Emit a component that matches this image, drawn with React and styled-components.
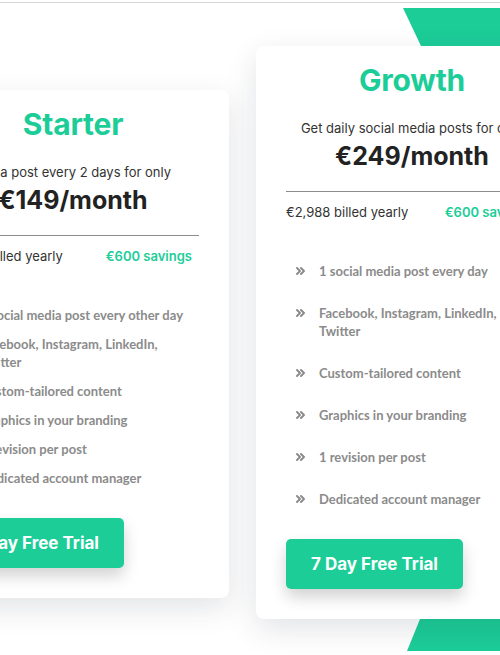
import React from 'react';
import styled, { createGlobalStyle } from 'styled-components';

const GlobalStyle = createGlobalStyle`
  html, body {
    margin: 0;
    padding: 0;
    background: #ffffff;
    overflow: hidden;
  }
  body {
    font-family: Inter, "Liberation Sans", sans-serif;
    color: #2b2b2b;
  }
`;

const green = '#1ccd98';

const plans = [
  {
    name: 'Starter',
    pitch: 'Get a post every 2 days for only',
    price: '€149/month',
    billed: '€1,188 billed yearly',
    savings: '€600 savings',
    offset: 44,
    spacing: 11,
    features: [
      '1 social media post every other day',
      'Facebook, Instagram, LinkedIn, Twitter',
      'Custom-tailored content',
      'Graphics in your branding',
      '1 revision per post',
      'Dedicated account manager',
    ],
  },
  {
    name: 'Growth',
    pitch: 'Get daily social media posts for only',
    price: '€249/month',
    billed: '€2,988 billed yearly',
    savings: '€600 savings',
    offset: 0,
    spacing: 24,
    featured: true,
    features: [
      '1 social media post every day',
      'Facebook, Instagram, LinkedIn, Twitter',
      'Custom-tailored content',
      'Graphics in your branding',
      '1 revision per post',
      'Dedicated account manager',
    ],
  },
];

const Page = styled.div`
  width: 100%;
  height: 655px;
  margin-top: 2px;
  border-top: 1px solid #d8d8d8;
  box-sizing: border-box;
  overflow: hidden;
`;

const Row = styled.div`
  display: flex;
  align-items: flex-start;
  gap: 27px;
  margin-left: -83px;
  padding-top: 43px;
`;

const CardSlot = styled.div`
  position: relative;
  flex: 0 0 312px;
  margin-top: ${(p) => p.$offset}px;
  z-index: 0;
`;

const Stripe = styled.svg`
  position: absolute;
  left: 140px;
  top: -38px;
  width: 240px;
  height: 643px;
  z-index: -1;
`;

const Card = styled.div`
  background: #ffffff;
  border-radius: 8px;
  padding: 16px 30px 30px;
  box-shadow: 0 10px 30px rgba(30, 40, 60, 0.13);
  display: flex;
  flex-direction: column;
`;

const Title = styled.h2`
  margin: 0;
  text-align: center;
  font-size: 30px;
  line-height: 36px;
  font-weight: 700;
  letter-spacing: -0.2px;
  color: ${green};
`;

const Pitch = styled.p`
  margin: 20px 0 0;
  text-align: center;
  font-size: 13px;
  line-height: 20px;
  color: #333;
  white-space: nowrap;
`;

const Price = styled.div`
  margin-top: 2px;
  text-align: center;
  font-size: 25px;
  line-height: 32px;
  font-weight: 700;
  color: #222;
`;

const Divider = styled.hr`
  margin: 19px 0 0;
  border: 0;
  border-top: 1px solid #8c8c8c;
`;

const Billed = styled.div`
  margin-top: 10px;
  display: flex;
  justify-content: space-between;
  padding-right: 7px;
  font-size: 13px;
  line-height: 20px;
  color: #333;

  span:last-child {
    color: ${green};
    font-weight: 600;
  }
`;

const Features = styled.ul`
  list-style: none;
  margin: 40px 0 0;
  padding: 0 0 0 10px;
  display: flex;
  flex-direction: column;
  gap: ${(p) => p.$spacing}px;
`;

const Feature = styled.li`
  display: flex;
  align-items: flex-start;
  font-family: Lato, "Open Sans", sans-serif;
  font-weight: 700;
  font-size: 13px;
  line-height: 18px;
  color: #8b8b8b;
`;

const Chevron = styled.svg`
  flex: 0 0 9px;
  width: 9px;
  height: 8px;
  margin: 5px 14px 0 0;
`;

const TrialButton = styled.button`
  margin-top: 31px;
  align-self: flex-start;
  width: 177px;
  height: 50px;
  border: 0;
  border-radius: 5px;
  background: ${green};
  color: #fff;
  font-family: Inter, "Liberation Sans", sans-serif;
  font-size: 17px;
  font-weight: 700;
  box-shadow: 0 8px 16px rgba(0, 0, 0, 0.18);
  cursor: pointer;
`;

const DoubleChevron = () => (
  <Chevron viewBox="0 0 9 8">
    <path
      d="M1 1 L4 4 L1 7 M5 1 L8 4 L5 7"
      fill="none"
      stroke="#8a8a8a"
      strokeWidth="1.9"
      strokeLinecap="round"
      strokeLinejoin="round"
    />
  </Chevron>
);

const PlanCard = ({ plan }) => (
  <CardSlot $offset={plan.offset}>
    {plan.featured && (
      <Stripe viewBox="0 0 240 643" preserveAspectRatio="none">
        <polygon points="7,0 240,0 240,643 11,643 24,611 25,38" fill={green} />
      </Stripe>
    )}
    <Card>
      <Title>{plan.name}</Title>
      <Pitch>{plan.pitch}</Pitch>
      <Price>{plan.price}</Price>
      <Divider />
      <Billed>
        <span>{plan.billed}</span>
        <span>{plan.savings}</span>
      </Billed>
      <Features $spacing={plan.spacing}>
        {plan.features.map((f) => (
          <Feature key={f}>
            <DoubleChevron />
            <span>{f}</span>
          </Feature>
        ))}
      </Features>
      <TrialButton>7 Day Free Trial</TrialButton>
    </Card>
  </CardSlot>
);

const App = () => (
  <>
    <GlobalStyle />
    <Page>
      <Row>
        {plans.map((p) => (
          <PlanCard key={p.name} plan={p} />
        ))}
      </Row>
    </Page>
  </>
);

export default App;
